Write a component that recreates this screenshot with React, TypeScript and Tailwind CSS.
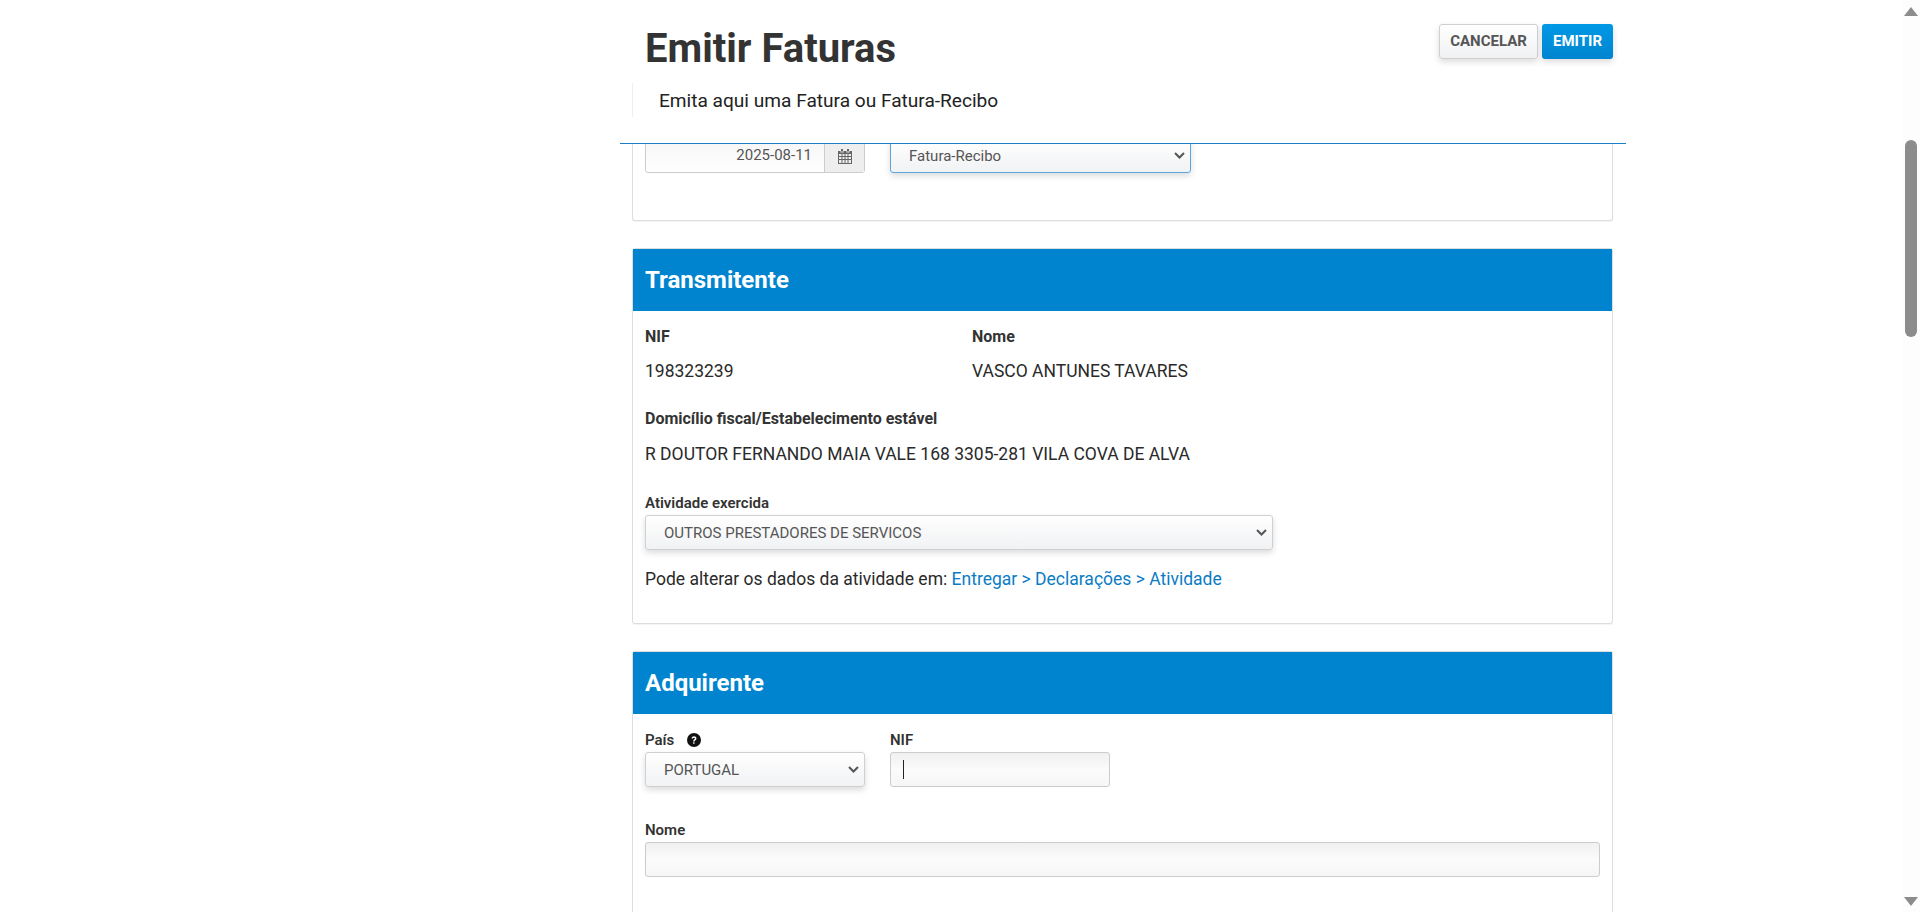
import { ReactNode } from 'react';

const SelectBox = ({ value, className }: { value: string; className: string }) => (
  <div className={`relative h-[35px] ${className}`}>
    <select
      defaultValue={value}
      className={`h-full w-full appearance-none rounded-[3px] border bg-linear-to-b from-white to-[#f1f2f4] pt-[2px] pl-[18px] text-[15px] text-[#555] shadow-[0_3px_6px_rgba(0,0,0,0.14)] ${className.includes('#5aa5de') ? 'border-[#5aa5de]' : 'border-[#cfd0d2]'}`}
    >
      <option>{value}</option>
    </select>
    <svg width="11" height="7" viewBox="0 0 11 7" className="pointer-events-none absolute top-[14px] right-[6px] fill-none stroke-[#555] stroke-2">
      <path d="M1 1l4.500 4.500L10 1" />
    </svg>
  </div>
);

const Field = ({ className }: { className: string }) => (
  <input
    type="text"
    className={`h-[35px] rounded-[3px] border border-[#ccc] bg-linear-to-b from-[#f0f0f1] via-[#fbfbfb] to-[#f6f6f7] ${className}`}
  />
);

const Card = ({ title, children }: { title: string; children: ReactNode }) => (
  <section className="mt-[27px] rounded-[3px] border border-[#ddd] bg-white shadow-[0_1px_1px_rgba(0,0,0,0.05)]">
    <h2 className="flex h-[62px] items-center bg-[#0084cf] pl-[12px] text-[24px] font-bold text-white">{title}</h2>
    {children}
  </section>
);

const Label = ({ children }: { children: ReactNode }) => (
  <p className="text-[16px] leading-[20px] font-bold text-[#333]">{children}</p>
);

const Value = ({ children }: { children: ReactNode }) => (
  <p className="mt-[14px] text-[17.5px] leading-[20px] text-[#2a2a2a]">{children}</p>
);

const Scrollbar = () => (
  <aside className="flex h-screen w-[18px] shrink-0 flex-col items-center bg-[#fdfdfd]">
    <svg width="14" height="9" viewBox="0 0 14 9" className="mt-[7px] fill-[#8c8c8c]">
      <path d="M7 0 14 9H0Z" />
    </svg>
    <div className="mt-[124px] h-[197px] w-[12px] rounded-full bg-[#8c8c8c]" />
    <div className="flex-1" />
    <svg width="14" height="9" viewBox="0 0 14 9" className="mb-[6px] fill-[#8c8c8c]">
      <path d="M0 0H14L7 9Z" />
    </svg>
  </aside>
);

export default function App() {
  return (
    <div className="flex h-screen overflow-hidden bg-white font-['Roboto',sans-serif]">
      <main className="min-w-0 flex-1">
        <div className="ml-[620px] w-[1006px]">
          <header className="relative z-10 h-[144px] border-b border-[#1a7fc4] bg-white">
            <div className="flex h-[71px] items-start justify-between pr-[13px] pl-[25px]">
              <h1 className="pt-[25px] text-[40px] leading-[48px] font-bold text-[#333]">Emitir Faturas</h1>
              <div className="flex gap-[4px] pt-[24px]">
                <button className="h-[35px] w-[99px] rounded-[3px] border border-[#d0d0d3] bg-linear-to-b from-white to-[#f0f1f3] text-[15px] font-bold text-[#555] shadow-[0_3px_6px_rgba(0,0,0,0.14)]">
                  CANCELAR
                </button>
                <button className="h-[35px] w-[71px] rounded-[3px] bg-linear-to-b from-[#0099e6] to-[#0084cf] text-[15px] font-bold text-white shadow-[0_3px_6px_rgba(0,0,0,0.14)]">
                  EMITIR
                </button>
              </div>
            </div>
            <p className="mt-[12px] ml-[12px] h-[34px] border-l border-[#eee] pl-[26px] text-[19.1px] leading-[36px] text-[#222]">
              Emita aqui uma Fatura ou Fatura-Recibo
            </p>
          </header>

          <div className="mr-[13px] ml-[12px]">
            {/* Top of this card sits under the header */}
            <section className="h-[83px] rounded-b-[3px] border border-t-0 border-[#ddd] bg-white shadow-[0_1px_1px_rgba(0,0,0,0.05)]">
              <div className="-mt-[6px] flex gap-[25px] pl-[12px]">
                <div className="flex h-[35px] w-[220px] rounded-[3px] border border-[#ccc] bg-linear-to-b from-[#f5f5f6] to-white">
                  <span className="flex-1 pt-[6px] pr-[12px] text-right text-[15px] leading-[20px] text-[#555]">2025-08-11</span>
                  <span className="flex w-[40px] items-center justify-center border-l border-[#ccc] bg-[#eee] pt-[1px]">
                    <svg width="14" height="15" viewBox="0 0 14 15" className="fill-[#666]">
                      <path d="M3 0h2v2.500H3zM9 0h2v2.500H9zM0 2h2.500v1.500h3V2h3v1.500h3V2H14v13H0zM1 5v2h2.500V5zm3.500 0v2h2V5zm3 0v2h2V5zm3 0v2H13V5zM1 8v2h2.500V8zm3.500 0v2h2V8zm3 0v2h2V8zm3 0v2H13V8zM1 11v3h2.500v-3zm3.500 0v3h2v-3zm3 0v3h2v-3zm3 0v3H13v-3z" fillRule="evenodd" />
                    </svg>
                  </span>
                </div>
                <SelectBox value="Fatura-Recibo" className="w-[301px] border-[#5aa5de]" />
              </div>
            </section>

            <Card title="Transmitente">
              <div className="h-[312px] px-[12px] pt-[16px]">
                <div className="flex">
                  <div className="w-[327px]">
                    <Label>NIF</Label>
                    <Value>198323239</Value>
                  </div>
                  <div>
                    <Label>Nome</Label>
                    <Value>VASCO ANTUNES TAVARES</Value>
                  </div>
                </div>
                <div className="mt-[28px]">
                  <Label>Domicílio fiscal/Estabelecimento estável</Label>
                  <p className="mt-[15px] text-[17.5px] leading-[20px] text-[#2a2a2a]">R DOUTOR FERNANDO MAIA VALE 168 3305-281 VILA COVA DE ALVA</p>
                </div>
                <div className="mt-[29px]">
                  <p className="text-[15px] leading-[20px] font-semibold text-[#333]">Atividade exercida</p>
                  <SelectBox value="OUTROS PRESTADORES DE SERVICOS" className="mt-[2px] w-[628px]" />
                  <p className="mt-[19px] text-[17.5px] leading-[20px] text-[#2a2a2a]">
                    Pode alterar os dados da atividade em:{' '}
                    <a href="#" className="text-[#0b7cc4]">Entregar &gt; Declarações &gt; Atividade</a>
                  </p>
                </div>
              </div>
            </Card>

            <Card title="Adquirente">
              <div className="h-[400px] px-[12px] pt-[16px]">
                <div className="flex gap-[25px]">
                  <div className="w-[220px]">
                    <div className="flex h-[20px] items-center gap-[13px]">
                      <span className="text-[15px] font-semibold text-[#333]">País</span>
                      <svg width="14" height="14" viewBox="0 0 13 13">
                        <circle cx="6.500" cy="6.500" r="6.500" fill="#111" />
                        <path d="M4.300 5.100c0-1.300 1-2 2.200-2s2.300.7 2.300 1.900c0 1.700-1.800 1.500-1.800 2.900H5.700c0-2 1.700-1.900 1.700-2.800 0-.5-.4-.8-.9-.8s-.9.3-1 .9zM5.700 8.700H7v1.300H5.700z" fill="#fff" />
                      </svg>
                    </div>
                    <SelectBox value="PORTUGAL" className="mt-[2px] w-[220px]" />
                  </div>
                  <div className="w-[220px]">
                    <p className="h-[20px] text-[15px] leading-[20px] font-semibold text-[#333]">NIF</p>
                    <div className="relative mt-[2px]">
                      <Field className="w-[220px]" />
                      <span className="absolute top-[8px] left-[13px] h-[19px] w-px bg-[#222]" />
                    </div>
                  </div>
                </div>
                <div className="mt-[33px]">
                  <p className="text-[15px] leading-[20px] font-semibold text-[#333]">Nome</p>
                  <Field className="mt-[2px] w-[955px]" />
                </div>
              </div>
            </Card>
          </div>
        </div>
      </main>
      <Scrollbar />
    </div>
  );
}
